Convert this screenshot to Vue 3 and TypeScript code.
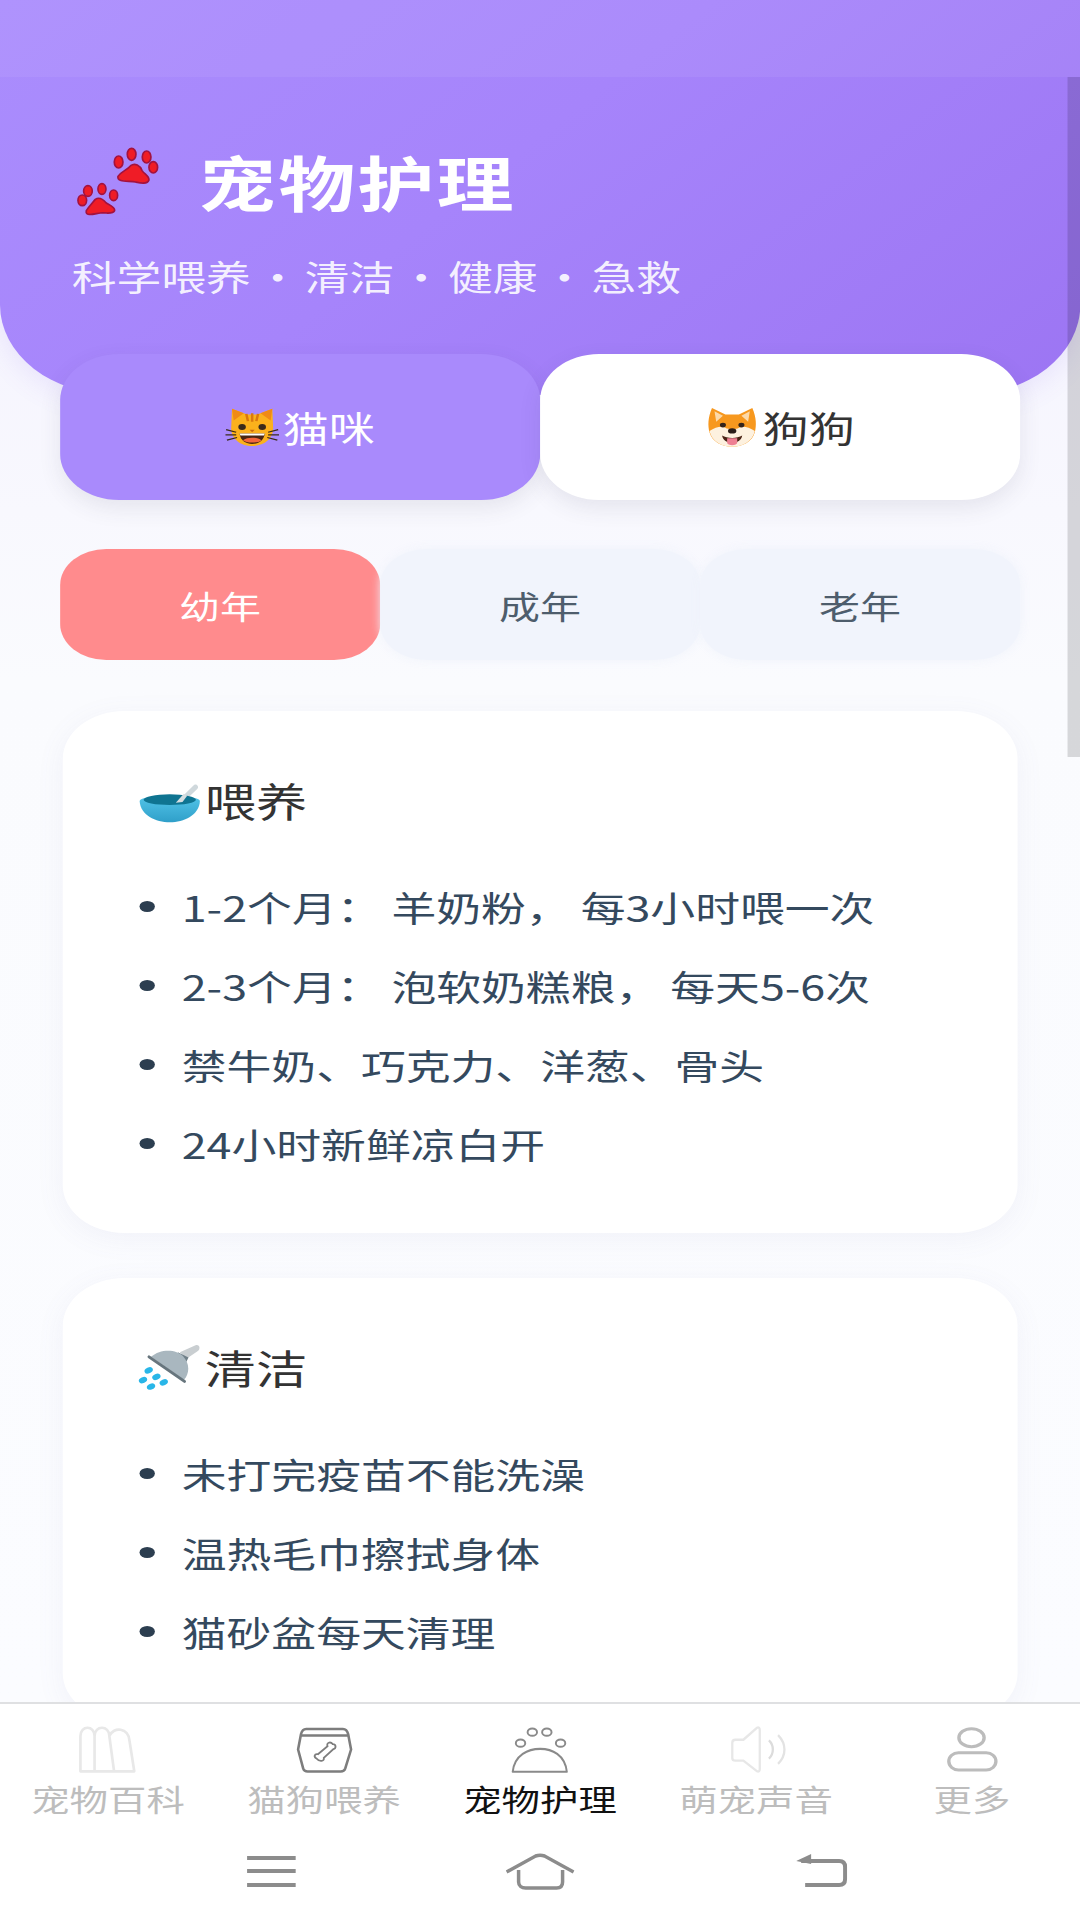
<script setup lang="ts">
interface Section { title: string; icon: 'bowl' | 'shower'; items: string[] }
const ages: string[] = ['幼年', '成年', '老年']
const sections: Section[] = [
  { title: '喂养', icon: 'bowl', items: ['1-2个月： 羊奶粉， 每3小时喂一次', '2-3个月： 泡软奶糕粮， 每天5-6次', '禁牛奶、巧克力、洋葱、骨头', '24小时新鲜凉白开'] },
  { title: '清洁', icon: 'shower', items: ['未打完疫苗不能洗澡', '温热毛巾擦拭身体', '猫砂盆每天清理'] }
]
</script>

<template>
  <div class="app">
    <main class="page">
      <header class="hero">
        <div class="status"></div>
        <div class="title-row">
          <svg class="paws" viewBox="70 40 270 230" preserveAspectRatio="none">
            <g fill="#ef1c26" stroke="#a3123f" stroke-width="5">
              <ellipse cx="207" cy="97" rx="13" ry="18" />
              <ellipse cx="246" cy="74" rx="13" ry="18" />
              <ellipse cx="291" cy="82" rx="13" ry="18" />
              <ellipse cx="311" cy="113" rx="13" ry="17" />
              <path d="M205 140C215 125 232 122 243 108C256 98 272 108 277 122C284 134 299 138 298 151C294 165 272 160 258 157C240 152 202 160 205 140Z" />
              <ellipse cx="98" cy="212" rx="13" ry="16" />
              <ellipse cx="115" cy="184" rx="13" ry="16" />
              <ellipse cx="157" cy="178" rx="12" ry="16" />
              <ellipse cx="192" cy="197" rx="12" ry="16" />
              <path d="M110 243C118 230 128 220 137 209C150 200 163 212 170 220C180 226 197 232 195 243C190 255 170 248 152 250C135 252 106 262 110 243Z" />
            </g>
          </svg>
          <h1>宠物护理</h1>
        </div>
        <p class="subtitle">科学喂养<i>·</i>清洁<i>·</i>健康<i>·</i>急救</p>
      </header>

      <div class="pets">
        <button class="pet on">
          <svg class="emoji" viewBox="0 0 64 64">
            <path d="M8 4L26 13H38L56 4L57 34C57 50 46 61 32 61S7 50 7 34Z" fill="#fbb11c" />
            <path d="M8 4L22 11L10 22ZM56 4L42 11L54 22Z" fill="#f08a15" />
            <path d="M32 11V24M25 12L27 23M39 12L37 23" stroke="#d9780f" stroke-width="3" fill="none" />
            <circle cx="20" cy="32" r="4.5" fill="#3a2a1a" /><circle cx="44" cy="32" r="4.5" fill="#3a2a1a" />
            <path d="M29 36H35L32 40Z" fill="#c96a10" />
            <path d="M17 42H47C46 53 39 58 32 58S18 53 17 42Z" fill="#4a2612" />
            <path d="M21 52C26 47 38 47 43 52C39 57 25 57 21 52Z" fill="#f3663c" />
            <path d="M17 42H47L46 45H18Z" fill="#fff" />
            <path d="M1 36L13 40M0 44L13 44M2 52L14 48M63 36L51 40M64 44L51 44M62 52L50 48" stroke="#3a2a1a" stroke-width="1.8" />
          </svg>
          <span>猫咪</span>
        </button>
        <button class="pet">
          <svg class="emoji" viewBox="0 0 64 64">
            <path d="M8 3L24 13H40L56 3C61 18 61 30 59 40C56 54 45 62 32 62S8 54 5 40C3 30 3 18 8 3Z" fill="#f7981e" />
            <path d="M11 8L21 15L13 24ZM53 8L43 15L51 24Z" fill="#fcd9a8" />
            <path d="M5 38C12 32 20 30 24 33C27 36 37 36 40 33C44 30 52 32 59 38C56 54 45 62 32 62S8 54 5 38Z" fill="#fdf1df" />
            <circle cx="21" cy="29" r="3.6" fill="#33231a" /><circle cx="43" cy="29" r="3.6" fill="#33231a" />
            <ellipse cx="32" cy="38" rx="5" ry="4" fill="#2a1d18" />
            <path d="M20 45C26 50 38 50 44 45C43 53 38 56 32 56S21 53 20 45Z" fill="#4a2416" />
            <path d="M26 49H38V56C38 61 26 61 26 56Z" fill="#ee7f92" />
          </svg>
          <span>狗狗</span>
        </button>
      </div>

      <div class="ages">
        <button v-for="(age, i) in ages" :key="age" class="age" :class="{ on: i === 0 }">{{ age }}</button>
      </div>

      <section v-for="s in sections" :key="s.title" class="card">
        <h2>
          <svg v-if="s.icon === 'bowl'" class="card-icon" viewBox="50 50 195 150" preserveAspectRatio="none">
            <defs>
              <linearGradient id="bowlBody" x1="0" y1="0" x2="0" y2="1"><stop offset="0" stop-color="#52c4e8" /><stop offset="1" stop-color="#2f9fc9" /></linearGradient>
            </defs>
            <path d="M170 130L218 82C226 72 238 85 230 92L190 130Z" fill="#cfd8dc" />
            <path d="M58 128C60 108 236 108 238 128C236 170 190 192 148 192S60 170 58 128Z" fill="url(#bowlBody)" />
            <ellipse cx="148" cy="124" rx="78" ry="16" fill="#0f7491" />
            <path d="M166 133L190 106L200 112L186 131Z" fill="#d6dde0" />
          </svg>
          <svg v-else class="card-icon" viewBox="50 40 195 155" preserveAspectRatio="none">
            <path d="M178 72L225 50C238 46 240 62 232 68L198 92Z" fill="#c9ced1" />
            <path d="M172 72L204 88L196 104L176 88Z" fill="#6f7f88" />
            <path d="M92 86C120 60 168 62 188 84C208 108 208 136 190 158Z" fill="#a9b7bf" />
            <path d="M86 86L192 162" stroke="#67757d" stroke-width="9" stroke-linecap="round" />
            <g fill="#29b6e8">
              <ellipse cx="85" cy="128" rx="13" ry="9" transform="rotate(-25 85 128)" />
              <ellipse cx="68" cy="158" rx="13" ry="9" transform="rotate(-25 68 158)" />
              <ellipse cx="108" cy="148" rx="13" ry="9" transform="rotate(-25 108 148)" />
              <ellipse cx="92" cy="178" rx="13" ry="9" transform="rotate(-25 92 178)" />
              <ellipse cx="130" cy="165" rx="13" ry="9" transform="rotate(-25 130 165)" />
            </g>
          </svg>
          <span>{{ s.title }}</span>
        </h2>
        <ul>
          <li v-for="item in s.items" :key="item">{{ item }}</li>
        </ul>
      </section>
      <div class="scrollbar"></div>
    </main>

    <nav class="nav">
      <div class="tabs">
        <a class="tab">
          <svg class="ico" viewBox="85 45 175 140" preserveAspectRatio="none" fill="none" stroke="#e8e8e8" stroke-width="8">
            <path d="M92 180V75C92 42 134 42 134 75V180ZM134 75C134 42 178 42 178 75L192 180H92M178 75C190 45 236 50 238 90L252 180H192" stroke-linejoin="round" />
          </svg>
          <span>宠物百科</span>
        </a>
        <a class="tab">
          <svg class="ico" viewBox="740 50 160 130" preserveAspectRatio="none" fill="none" stroke="#7d7d7d" stroke-width="7">
            <path d="M772 58H872C880 58 884 64 886 72L894 115L878 168C876 174 872 176 866 176H776C770 176 766 174 764 168L750 115L758 72C760 64 764 58 772 58ZM758 76H886" stroke-linejoin="round" />
            <path d="M800 140C792 136 794 126 804 128L830 106C826 96 838 92 844 100C854 100 854 112 846 114L820 138C822 148 808 150 800 140Z" stroke-width="5" />
          </svg>
          <span>猫狗喂养</span>
        </a>
        <a class="tab active">
          <svg class="ico" viewBox="100 60 150 115" preserveAspectRatio="none" fill="none" stroke="#8a8a8a" stroke-width="5">
            <ellipse cx="125" cy="102" rx="12" ry="9" /><ellipse cx="155" cy="75" rx="12" ry="9" />
            <ellipse cx="192" cy="75" rx="12" ry="9" /><ellipse cx="227" cy="102" rx="12" ry="9" />
            <path d="M105 172C110 130 145 116 175 116S238 130 243 172Z" stroke-linejoin="round" />
          </svg>
          <span>宠物护理</span>
        </a>
        <a class="tab">
          <svg class="ico" viewBox="710 45 180 140" preserveAspectRatio="none" fill="none" stroke="#e7e7e7" stroke-width="7">
            <path d="M726 95C726 88 730 86 736 86H760L802 50C806 48 810 50 810 56V174C810 180 806 182 802 180L760 148H736C730 148 726 146 726 140Z" stroke-linejoin="round" />
            <path d="M838 88C854 102 854 128 838 142" stroke="#dcdcdc" />
            <path d="M866 72C892 98 892 132 866 158" stroke="#e3e3e3" />
          </svg>
          <span>萌宠声音</span>
        </a>
        <a class="tab">
          <svg class="ico" viewBox="1360 55 140 125" preserveAspectRatio="none" fill="none" stroke="#bcbcbc" stroke-width="8">
            <ellipse cx="1430" cy="86" rx="30" ry="24" />
            <rect x="1376" y="126" width="112" height="46" rx="23" />
          </svg>
          <span>更多</span>
        </a>
      </div>
      <div class="sys">
        <svg class="sys-menu" viewBox="247 1850 49 38" preserveAspectRatio="none" fill="none" stroke="#8c8c8c" stroke-width="4">
          <path d="M247 1856H296M247 1869H296M247 1883H296" />
        </svg>
        <svg class="sys-home" viewBox="506 1850 69 38" preserveAspectRatio="none" fill="none" stroke="#8c8c8c" stroke-width="3.5">
          <path d="M507 1870L536 1854C539 1853 542 1853 545 1854L574 1870" />
          <path d="M519 1868V1880C519 1884 522 1886 526 1886H557C561 1886 563 1884 563 1880V1868" />
        </svg>
        <svg class="sys-back" viewBox="797 1850 51 38" preserveAspectRatio="none" fill="none" stroke="#8c8c8c" stroke-width="4">
          <path d="M802 1859H840C844 1859 846 1861 846 1865V1877C846 1881 844 1883 840 1883H806" />
          <path d="M797 1859L812 1852V1862Z" fill="#8c8c8c" stroke="none" />
        </svg>
      </div>
    </nav>
  </div>
</template>

<style>
html, body { margin: 0; overflow: hidden; background: #fff; }
</style>

<style scoped>
/* The reference is stretched horizontally: everything is laid out at 843.75px and widened to 1080. */
.app {
  width: 843.75px;
  height: 1920px;
  transform: scaleX(1.28);
  transform-origin: 0 0;
  display: flex;
  flex-direction: column;
  overflow: hidden;
  font-family: "Noto Sans CJK SC", "Noto Sans", sans-serif;
}
.page {
  position: relative;
  flex: 1;
  min-height: 0;
  overflow: hidden;
  background: linear-gradient(180deg, #f6f5fe 20%, #fafbfe 40%, #fbfcff 100%);
}
.hero {
  height: 395px;
  background: linear-gradient(135deg, #aa8dfd 0%, #a684fb 45%, #9c75f3 100%);
  border-radius: 0 0 90px 90px;
  box-shadow: 0 6px 24px rgba(124, 92, 230, 0.12);
  color: #fff;
}
.status { height: 77px; background: rgba(255, 255, 255, 0.06); }
.title-row { display: flex; align-items: center; height: 80px; margin-top: 64px; padding-left: 57px; }
.paws { width: 70.3px; height: 76.7px; flex: none; }
h1 { margin: 0 0 0 28px; font-size: 60px; line-height: 80px; font-weight: 700; letter-spacing: 2px; }
.subtitle { margin: 30px 0 0 56px; font-size: 35px; line-height: 50px; color: rgba(255, 255, 255, 0.9); }
.subtitle i { display: inline-block; width: 42px; text-align: center; font-style: normal; }

.pets { display: grid; grid-template-columns: 1fr 1fr; height: 146px; margin: -41px 47px 0; position: relative; }
.pet {
  display: flex; align-items: center; justify-content: center;
  border: 0; padding: 0; background: #fff; color: #333;
  border-radius: 46px; font: inherit; font-size: 36px;
  box-shadow: 0 8px 20px rgba(60, 60, 90, 0.1);
}
.pet.on { background: #a98afc; color: #fff; }
.emoji { width: 42px; height: 44px; margin-right: 3px; flex: none; }

.ages { display: grid; grid-template-columns: 1fr 1fr 1fr; height: 111px; margin: 49px 47px 0; }
.age {
  border: 0; padding: 0; background: #f1f4fc; color: #4e5d6c;
  border-radius: 36px; font: inherit; font-size: 32px;
  box-shadow: 0 0 8px rgba(240, 243, 252, 0.9);
}
.age.on { background: #ff8b8d; color: #fff; box-shadow: none; }

.card {
  margin: 51px 49px 0;
  padding: 59px 58px 50px;
  background: #fff;
  border-radius: 48px;
  box-shadow: 0 6px 24px rgba(110, 120, 170, 0.07);
}
.card + .card { margin-top: 45px; }
h2 { display: flex; align-items: center; height: 60px; margin: 0; font-size: 40px; font-weight: 400; color: #333; }
.card-icon { width: 51px; height: 50px; flex: none; margin-right: 2px; }
ul { margin: 37px 0 0; padding: 0; list-style: none; }
li { display: flex; align-items: center; height: 79px; font-size: 35px; color: #34495e; white-space: nowrap; }
li::before { content: ""; width: 12px; height: 11px; margin: 0 21px 0 2px; border-radius: 50%; background: #2c3e50; flex: none; }

.scrollbar { position: absolute; right: 0; top: 77px; width: 9.4px; height: 680px; background: rgba(0, 0, 0, 0.14); }

.nav { height: 218px; flex: none; background: #fff; border-top: 2px solid #dfe0e2; box-sizing: border-box; }
.tabs { display: grid; grid-template-columns: repeat(5, 1fr); padding-top: 22px; }
.tab { display: flex; flex-direction: column; align-items: center; color: #bdbdbd; font-size: 30px; line-height: 40px; }
.tab.active { color: #111; }
.ico { width: 46px; height: 47px; margin-bottom: 5px; }
.sys { display: flex; align-items: center; padding: 34px 0 0 193px; }
.sys-menu { width: 38.3px; height: 38px; }
.sys-home { width: 53.9px; height: 38px; margin-left: 164px; }
.sys-back { width: 39.8px; height: 38px; margin-left: 173px; }
</style>
